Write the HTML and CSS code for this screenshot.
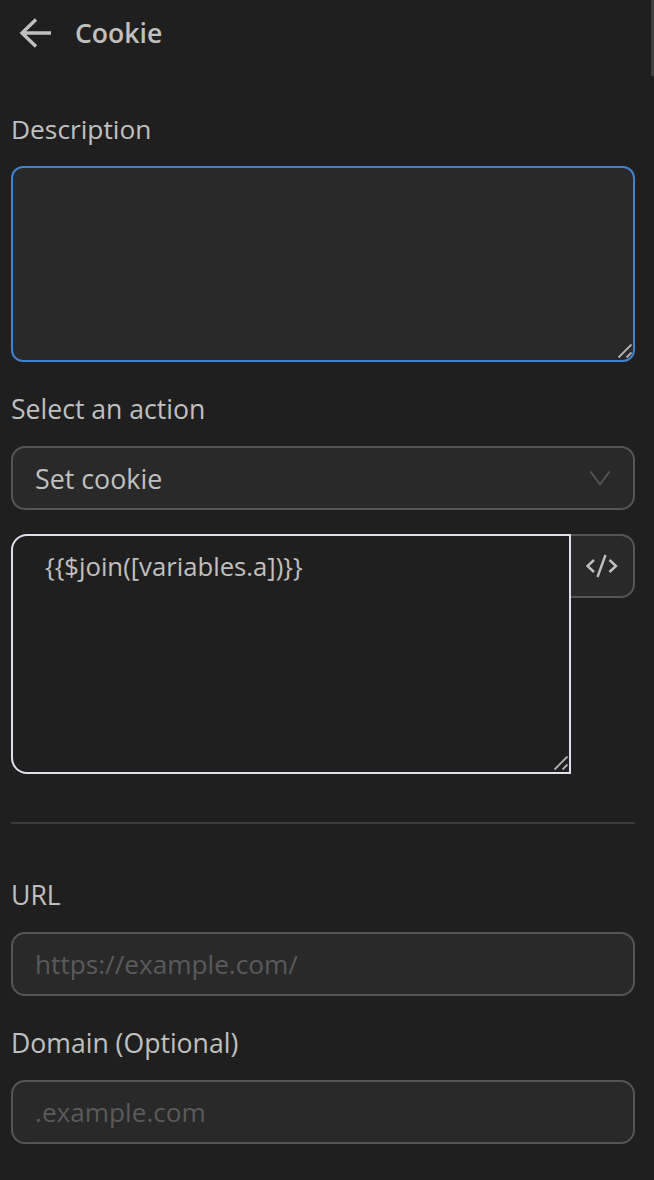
FILE: index.html
```html
<!DOCTYPE html>
<html lang="en">
<head>
  <meta charset="UTF-8" />
  <meta name="viewport" content="width=device-width, initial-scale=1.0"/>
  <title>Cookie</title>
  <link rel="stylesheet" href="styles.css">
</head>
<body>
<div class="scroll-thumb"></div>
<header>
  <svg class="back-icon" width="34" height="32" viewBox="0 0 34 32">
    <path d="M33 16H4M18 2.5 4 16l14 13.5" fill="none" stroke="#c0c0c0" stroke-width="3.4"/>
  </svg>
  <h1>Cookie</h1>
</header>

<div class="container">
  <label class="field-label first">Description</label>
  <div class="area-wrap">
    <textarea class="description"></textarea>
    <svg class="grip" width="16" height="16" viewBox="0 0 16 16">
      <path d="M1.5 14.5 14.5 1.5M9.5 14.5l5-5" stroke="#b0b0b0" stroke-width="1.8"/>
    </svg>
  </div>

  <label class="field-label action-label">Select an action</label>
  <div class="select-box">
    <span>Set cookie</span>
    <svg width="22" height="16" viewBox="0 0 22 16">
      <path d="M1.5 1.5 11 14.5 20.5 1.5" fill="none" stroke="#5a5a5a" stroke-width="1.6"/>
    </svg>
  </div>

  <div class="code-row">
    <div class="area-wrap code-wrap">
      <textarea class="code-input">{{$join([variables.a])}}</textarea>
      <svg class="grip" width="16" height="16" viewBox="0 0 16 16">
        <path d="M1.5 14.5 14.5 1.5M9.5 14.5l5-5" stroke="#b0b0b0" stroke-width="1.8"/>
      </svg>
    </div>
    <button class="code-btn">
      <svg width="32" height="26" viewBox="0 0 32 26">
        <path d="M8 7 1.5 13 8 19M23.5 7 30 13l-6.5 6M19.5 2l-8 22" fill="none" stroke="#c0c0c0" stroke-width="2.4"/>
      </svg>
    </button>
  </div>

  <hr class="divider">

  <label class="field-label url-label">URL</label>
  <input type="text" class="text-input" placeholder="https://example.com/">

  <label class="field-label domain-label">Domain (Optional)</label>
  <input type="text" class="text-input" placeholder=".example.com">
</div>
</body>
</html>
```

FILE: styles.css
```css
* {
  box-sizing: border-box;
}
html, body {
  height: 100%;
  overflow: hidden;
}
body {
  margin: 0;
  font-family: 'Open Sans', sans-serif;
  background: #1f1f1f;
  color: #c0c0c0;
}
.scroll-thumb {
  position: absolute;
  top: 0;
  right: 0;
  width: 3px;
  height: 76px;
  background: #3e3e3e;
}
header {
  height: 66px;
  padding-left: 18px;
  display: flex;
  align-items: center;
}
.back-icon {
  display: block;
}
header h1 {
  margin: 0 0 0 23px;
  font-size: 26.6px;
  font-weight: 600;
  color: #c0c0c0;
}
.container {
  padding: 0 19px 0 11px;
}
.field-label {
  display: block;
  height: 36px;
  line-height: 36px;
  margin-top: 30px;
  margin-bottom: 18px;
  font-size: 26.6px;
}
.field-label.first {
  margin-top: 45px;
  margin-bottom: 19px;
  font-size: 26.3px;
}
.action-label {
  margin-top: 29px;
  margin-bottom: 19px;
}
.url-label {
  margin-top: 53px;
  margin-bottom: 19px;
}
.domain-label {
  margin-top: 29px;
  margin-bottom: 19px;
}
textarea, input, button {
  font-family: inherit;
  color: inherit;
  outline: none;
}
.area-wrap {
  position: relative;
}
.code-wrap {
  flex: 1;
}
.grip {
  position: absolute;
  right: 2px;
  bottom: 3px;
  pointer-events: none;
}
.description {
  display: block;
  width: 100%;
  height: 196px;
  background: #292929;
  border: 2px solid #3f82cf;
  border-radius: 12px;
  resize: none;
}
.select-box {
  height: 64px;
  padding: 0 22px;
  display: flex;
  justify-content: space-between;
  align-items: center;
  background: #292929;
  border: 2px solid #555;
  border-radius: 14px;
  font-size: 26.8px;
}
.code-row {
  display: flex;
  align-items: flex-start;
  margin-top: 24px;
}
.code-input {
  display: block;
  width: 100%;
  height: 240px;
  padding: 13px 32px;
  background: #1f1f1f;
  border: 2px solid #dfe1ea;
  border-radius: 16px 0 0 16px;
  font-size: 25.7px;
  line-height: 36px;
  resize: none;
}
.code-btn {
  width: 65px;
  height: 64px;
  margin-left: -1px;
  padding: 0;
  display: flex;
  justify-content: center;
  align-items: center;
  background: #292929;
  border: 2px solid #555;
  border-left: none;
  border-radius: 0 14px 14px 0;
}
.divider {
  height: 2px;
  margin: 48px 0 0;
  background: #3a3a3a;
  border: none;
}
.text-input {
  display: block;
  width: 100%;
  height: 64px;
  padding: 0 22px;
  background: #292929;
  border: 2px solid #555;
  border-radius: 14px;
  font-size: 26.2px;
}
.text-input::placeholder {
  color: #5a5a5a;
}
```
